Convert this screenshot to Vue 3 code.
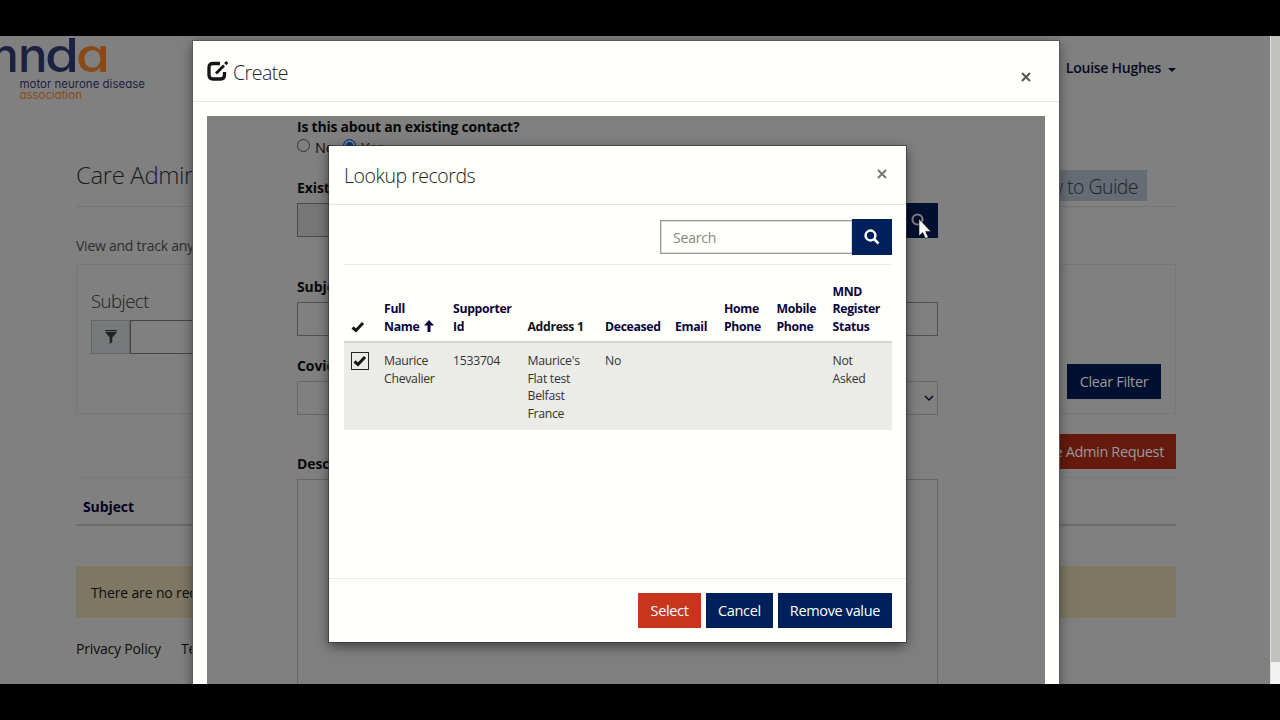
<script setup>
const columns = [
  { label: 'Full Name', sort: true },
  { label: 'Supporter Id' },
  { label: 'Address 1', plain: true },
  { label: 'Deceased' },
  { label: 'Email' },
  { label: 'Home Phone' },
  { label: 'Mobile Phone' },
  { label: 'MND Register Status' },
]
const record = ['Maurice Chevalier', '1533704', "Maurice's Flat test Belfast France", 'No', '', '', '', 'Not Asked']
</script>

<template>
  <div class="screen">
    <div class="page">
      <div class="site">
        <header class="top">
          <svg class="logo" width="160" height="70" viewBox="0 0 160 70">
            <g class="mark">
              <text class="navy" x="-25" y="36" textLength="44" lengthAdjust="spacingAndGlyphs">m</text>
              <text class="navy" x="18" y="36" textLength="29.500" lengthAdjust="spacingAndGlyphs">n</text>
              <text class="navy" x="45" y="36" textLength="34" lengthAdjust="spacingAndGlyphs">d</text>
              <text class="orange" x="76" y="36" textLength="34" lengthAdjust="spacingAndGlyphs">a</text>
            </g>
            <text class="name navy" x="19.500" y="51.500" textLength="125.500">motor neurone disease</text>
            <text class="name orange" x="19.500" y="63" textLength="62.500">association</text>
          </svg>
          <div class="user"><span>Louise Hughes</span><i class="caret"></i></div>
        </header>
        <main>
          <div class="titlebar"><h1>Care Admin Requests</h1><span class="guide">How to Guide</span></div>
          <p class="intro">View and track any requests</p>
          <section class="filter">
            <div>
              <h3>Subject</h3>
              <div class="group">
                <span class="addon"><svg width="14" height="16" viewBox="0 0 14 16"><path d="M1 1H13V2.300H1ZM1 3H13L8.300 8.500V13L5.700 15V8.500Z" /></svg></span>
                <span class="field"></span>
              </div>
            </div>
            <button class="btn navybg clear">Clear Filter</button>
          </section>
          <div class="actions"><button class="btn redbg">Create Admin Request</button></div>
          <div class="gridhead">Subject</div>
          <div class="notice">There are no records to display.</div>
          <footer><span>Privacy Policy</span><span>Terms</span></footer>
        </main>
      </div>
      <div class="scroll"><i></i></div>

      <div class="create">
        <div class="create-head">
          <svg width="22" height="22" viewBox="0 0 22 22" fill="none" stroke="#161616">
            <path d="M13 3.500H6Q2 3.500 2 7.500V15Q2 19 6 19H13.500Q17.500 19 17.500 15V12" stroke-width="3.300" />
            <path d="M9 13.500L17 5.500" stroke-width="2.800" /><path d="M18.200 4.100L20.300 2" stroke-width="3" />
          </svg>
          <h2>Create</h2>
          <svg class="x" width="10" height="10" viewBox="0 0 10 10"><path d="M1 1L9 9M9 1L1 9" /></svg>
        </div>
        <div class="frame">
          <div class="form">
            <label class="question">Is this about an existing contact?</label>
            <div class="radios"><i class="radio"></i><span>No</span><i class="radio on"></i><span>Yes</span></div>
            <label>Existing Contact</label>
            <div class="lookup"><span></span><b><svg width="16" height="16" viewBox="0 0 16 16"><circle cx="6.500" cy="6.500" r="5" /><path d="M10 10L14.500 14.500" /></svg></b></div>
            <label>Subject</label>
            <div class="box"></div>
            <label>Covid-19</label>
            <div class="box select"><svg width="10" height="7" viewBox="0 0 10 7"><path d="M1 1L5 5L9 1" /></svg></div>
            <label>Description</label>
            <div class="area"></div>
          </div>
        </div>
      </div>

      <svg class="cursor" width="14" height="22" viewBox="0 0 14 22"><path d="M1 1V18L4.700 14.500L7.500 20.500L10.300 19.200L7.600 13.400H12.800Z" /></svg>

      <div class="modal">
        <div class="modal-head">
          <h2>Lookup records</h2>
          <svg class="x" width="10" height="10" viewBox="0 0 10 10"><path d="M1 1L9 9M9 1L1 9" /></svg>
        </div>
        <div class="modal-body">
          <div class="search">
            <span class="input">Search</span>
            <b><svg width="16" height="16" viewBox="0 0 16 16"><circle cx="6.500" cy="6.500" r="4.900" /><path d="M10 10L14.500 14.500" /></svg></b>
          </div>
          <div class="row head">
            <div class="cell"><svg class="tick" width="14" height="12" viewBox="0 0 14 12"><path d="M1.500 6.500L5 9.500L12 2" /></svg></div>
            <div v-for="c in columns" :key="c.label" class="cell" :class="{ plain: c.plain }">
              {{ c.label }}
              <svg v-if="c.sort" class="arrow" width="10" height="12" viewBox="0 0 10 12"><path d="M5 0L10 5.500H6.500V12H3.500V5.500H0Z" /></svg>
            </div>
          </div>
          <div class="row record">
            <div class="cell"><span class="check"><svg class="tick" width="14" height="12" viewBox="0 0 14 12"><path d="M1.500 6.500L5 9.500L12 2" /></svg></span></div>
            <div v-for="(v, i) in record" :key="i" class="cell">{{ v }}</div>
          </div>
        </div>
        <div class="modal-foot">
          <button class="btn redbg select-btn">Select</button>
          <button class="btn navybg">Cancel</button>
          <button class="btn navybg">Remove value</button>
        </div>
      </div>
    </div>
  </div>
</template>

<style>
body { margin: 0; background: #000; overflow: hidden; }
</style>

<style scoped>
* { box-sizing: border-box; }
.screen { width: 1280px; height: 720px; padding: 36px 0; background: #000; font: 14px/20px "Open Sans", "Noto Sans", sans-serif; letter-spacing: -0.25px; color: #0c0c0c; }
.page { position: relative; height: 648px; display: flex; overflow: hidden; background: #808080; }
.site { width: 1270px; }
h1, h2, h3, p { margin: 0; font-weight: 300; }
.top { height: 107px; display: flex; justify-content: space-between; padding-right: 94px; }
.logo { display: block; font-family: Inter, sans-serif; font-feature-settings: "cv11"; letter-spacing: 0; }
.mark { font-size: 47px; font-weight: 500; }
.name { font-size: 11.500px; }
.navy { fill: #1c2142; }
.orange { fill: #8a4a18; }
.user { display: flex; align-items: center; gap: 7px; height: 24px; margin-top: 20px; font-weight: 600; color: #050a24; letter-spacing: -0.25px; }
.caret { border: 4px solid transparent; border-top-color: #050a24; border-bottom: 0; margin-top: 3px; }
main { margin-left: 76px; width: 1100px; }
.titlebar { height: 64px; display: flex; align-items: center; justify-content: space-between; border-bottom: 1px solid #747474; }
h1 { font-size: 24px; letter-spacing: -0.4px; color: #1b1b1b; }
.guide { height: 31px; margin: 21px 29px 0 0; padding: 0 9px; line-height: 33px; font-size: 19.500px; font-weight: 300; letter-spacing: -0.55px; background: #666c73; color: #1d2430; }
.intro { margin-top: 29px; height: 28px; font-size: 14px; font-weight: 400; color: #2e2e2e; }
.filter { height: 150px; border: 1px solid #777; padding: 24px 14px 0; display: flex; justify-content: space-between; }
h3 { font-size: 18.500px; line-height: 23px; letter-spacing: -0.5px; color: #1c1c1c; }
.group { display: flex; margin-top: 8px; }
.addon { width: 39px; height: 34px; display: grid; place-items: center; background: #777a7a; border: 1px solid #666; }
.addon svg { fill: #222; }
.field { width: 180px; height: 34px; border: 1px solid #444; }
.btn { height: 35px; padding: 0 12px; border: 0; border-radius: 0; font: 14.500px/33px "Open Sans", sans-serif; letter-spacing: -0.35px; color: #fff; white-space: nowrap; }
.navybg { background: #00205b; }
.redbg { background: #c8351d; }
.select-btn { width: 63px; }
.site .btn { color: #9a9a9a; }
.site .navybg { background: #001030; }
.site .redbg { background: #651a0d; }
.clear { margin-top: 75px; width: 94px; }
.actions { height: 64px; padding-top: 20px; display: flex; justify-content: flex-end; border-bottom: 1px solid #797979; }
.gridhead { height: 48px; padding: 19px 7px; font-weight: 700; letter-spacing: -0.1px; color: #050023; border-bottom: 2px solid #6c6c6c; }
.notice { height: 52px; margin-top: 40px; padding: 17px 15px; background: #7e7764; letter-spacing: -0.15px; }
footer { display: flex; gap: 20px; padding-top: 21px; letter-spacing: -0.18px; }
.scroll { width: 10px; background: #f2f2f2; border-left: 1px solid #e0e0e0; }
.scroll i { display: block; height: 626px; background: #c1c2be; }

.create { position: absolute; left: 193px; top: 5px; width: 866px; height: 680px; background: #fffffc; box-shadow: 0 0 0 1px #5a5a5a, 0 3px 12px rgba(0,0,0,.5); padding: 0 14px; }
.create-head { height: 61px; margin: 0 -14px 14px; padding: 0 28px 0 14px; display: flex; align-items: center; border-bottom: 1px solid #e5e5e5; }
h2 { font-size: 19.500px; color: #222; letter-spacing: -0.5px; }
.create-head h2 { margin: 4px auto 0 4px; }
.x { fill: none; stroke: #555; stroke-width: 2; margin-top: 11px; }
.frame { height: 620px; background: #808080; padding: 1px 0 0 90px; }
.form { width: 641px; }
label { display: block; height: 20px; font-weight: 700; font-size: 14px; letter-spacing: -0.1px; color: #080808; }
.question { letter-spacing: -0.22px; }
.radios { display: flex; align-items: center; height: 20px; padding-top: 1px; margin-bottom: 21px; font-size: 14.500px; }
.radio { width: 13px; height: 13px; border: 1px solid #333; border-radius: 50%; margin: -5px 5px 0 0; }
.radio.on { margin-left: 9px; border-color: #003a7d; background: #003a7d; box-shadow: inset 0 0 0 2px #808080; }
.lookup { height: 35px; margin: 5px 0 39px; display: flex; }
.lookup span { flex: 1; height: 34px; border: 1px solid #4a4a4a; background: #777; }
.lookup b { width: 39px; background: #001030; display: grid; place-items: center; }
.lookup svg { fill: none; stroke: #808080; stroke-width: 2.200; }
.box { height: 34px; margin: 5px 0 20px; border: 1px solid #505050; }
.select { margin: 5px 0 39px; display: flex; align-items: center; justify-content: flex-end; padding-right: 3px; border-color: #686868; }
.select svg { fill: none; stroke: #0a0a20; stroke-width: 1.500; }
.area { height: 240px; margin-top: 5px; border: 1px solid #666; }
.cursor { position: absolute; left: 918px; top: 182px; fill: #fff; stroke: #111; stroke-width: .6; }

.modal { position: absolute; left: 329px; top: 110px; width: 577px; height: 496px; background: #fffffc; box-shadow: 0 0 0 1px rgba(50,50,50,.6), 0 4px 12px rgba(0,0,0,.55); display: flex; flex-direction: column; }
.modal-head { height: 59px; padding: 2px 19px 0 15px; display: flex; align-items: center; justify-content: space-between; border-bottom: 1px solid #e5e5e2; }
.modal-head .x { margin-top: -4px; stroke: #777; }
.modal-head h2 { letter-spacing: -0.47px; }
.modal-body { flex: 1; padding: 14px 14px 0 15px; }
.search { display: flex; justify-content: flex-end; height: 46px; border-bottom: 1px solid #e8e8e4; }
.input { width: 192px; height: 34px; margin-top: 1px; border: 1px solid #999; box-shadow: inset 0 0 0 .5px #bbb; border-right: 0; padding-left: 12px; line-height: 33px; letter-spacing: -0.2px; color: #858585; }
.search b { width: 40px; height: 36px; background: #00205b; display: grid; place-items: center; }
.search svg { fill: none; stroke: #fff; stroke-width: 2.500; }
.row { display: grid; grid-template-columns: 33px 69px 74.500px 77.500px 70px 49px 52.500px 56px 66.500px; font-size: 12.250px; line-height: 17.600px; letter-spacing: -0.28px; }
.cell { padding: 0 7px; }
.head { height: 78px; align-items: end; padding-bottom: 5.500px; font-weight: 700; letter-spacing: -0.33px; color: #08043c; border-bottom: 2px solid #d5d5d2; }
.head .plain { color: #111; }
.record { height: 87px; padding-top: 9px; background: #ebebe7; color: #333; }
.tick { fill: none; stroke: #151515; stroke-width: 3; vertical-align: -2px; }
.arrow { fill: #08043c; vertical-align: -1px; margin-left: 2px; }
.check { display: grid; place-items: center; width: 18px; height: 18px; border: 1.500px solid #222; }
.modal-foot { height: 64px; padding: 14px 14px; display: flex; justify-content: flex-end; gap: 5px; border-top: 1px solid #e8e8e4; }
</style>
